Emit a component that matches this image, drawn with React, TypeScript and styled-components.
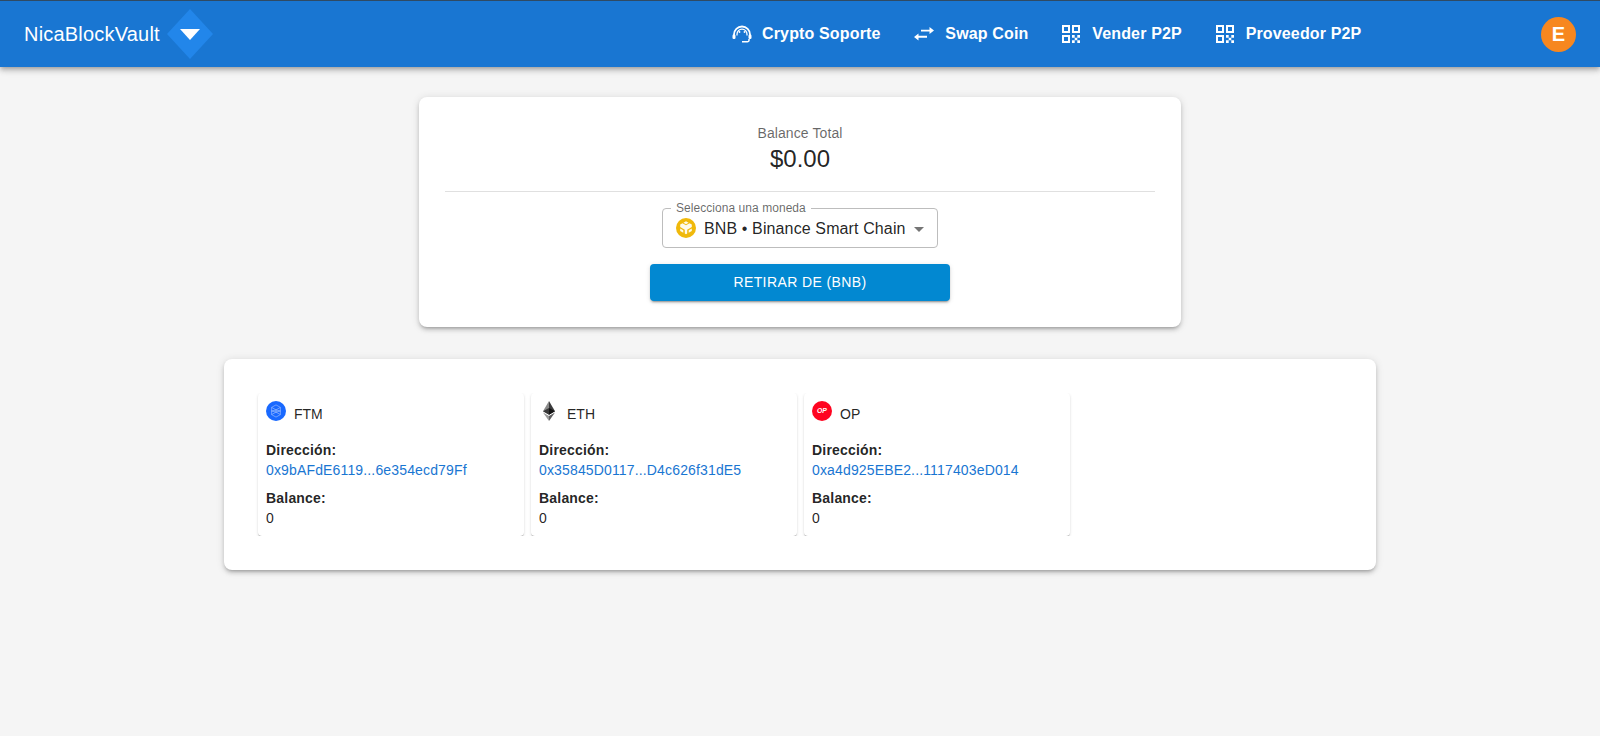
import styled, { createGlobalStyle } from 'styled-components';
import { MdArrowDropDown } from 'react-icons/md';

function FtmIcon() {
  return (
    <svg width="20" height="20" viewBox="0 0 20 20">
      <circle cx="10" cy="10" r="10" fill="#1969ff" />
      <path d="M5.600 6.400L10 3.900l4.400 2.500v7.200L10 16.100l-4.400-2.500zM5.600 6.400L10 8.900l4.400-2.500M5.600 13.600l4.400-2.500 4.400 2.500M10 8.900v2.200M5.600 10L10 8.900l4.400 1.100L10 11.100z" fill="none" stroke="#a9c6ff" strokeWidth="0.600" />
    </svg>
  );
}

function EthIcon() {
  return (
    <svg width="20" height="20" viewBox="0 0 20 20">
      <path d="M10 0L4 10.200l6 3.500z" fill="#8a8a8a" />
      <path d="M10 0l6 10.200-6 3.500z" fill="#3c3c3d" />
      <path d="M10 6.900l-6 3.300 6 3.500z" fill="#393939" />
      <path d="M10 6.900l6 3.300-6 3.500z" fill="#141414" />
      <path d="M4 11.400L10 20v-5z" fill="#9a9a9a" />
      <path d="M16 11.400L10 20v-5z" fill="#5f5f60" />
    </svg>
  );
}

function OpIcon() {
  return (
    <svg width="20" height="20" viewBox="0 0 20 20">
      <circle cx="10" cy="10" r="10" fill="#ff0420" />
      <text x="10" y="12" textAnchor="middle" fontSize="6.800" fontWeight="700" fontStyle="italic" fontFamily="'Liberation Sans', sans-serif" fill="#fff">OP</text>
    </svg>
  );
}

function BnbIcon() {
  return (
    <svg width="20" height="20" viewBox="0 0 20 20">
      <circle cx="10" cy="10" r="10" fill="#f0b90b" />
      <path d="M10 3.200l2.600 1.500L10 6.200 7.400 4.700zM4.200 6.500l2.300-1.300L10 7.200l3.500-2 2.300 1.300v2.600l-4.600 2.700v3.700L10 16.200l-1.200-.7v-3.700L4.200 9.100zM4.200 10.500l3.100 1.800v2.500l-3.100-1.800zM15.800 10.500v2.500l-3.100 1.800v-2.500z" fill="#fff" opacity="0.92" />
    </svg>
  );
}

function HeadsetIcon() {
  return (
    <svg width="20" height="18" viewBox="0 0 20 18" fill="none" stroke="#fff">
      <path d="M2 12V9.500a8 8 0 0 1 16 0V12" strokeWidth="1.800" />
      <path d="M5 10.500V9.200a5 5 0 0 1 10 0v1.300" strokeWidth="1.300" />
      <rect x="0.500" y="9.500" width="3" height="4.500" rx="1.200" fill="#fff" stroke="none" />
      <rect x="16.500" y="9.500" width="3" height="4.500" rx="1.200" fill="#fff" stroke="none" />
      <path d="M17 14v1.200a1.600 1.600 0 0 1-1.600 1.600H10" strokeWidth="1.500" />
      <circle cx="7.500" cy="7" r="0.900" fill="#fff" stroke="none" />
      <circle cx="12.500" cy="7" r="0.900" fill="#fff" stroke="none" />
    </svg>
  );
}

function SwapIcon() {
  return (
    <svg width="21" height="14" viewBox="0 0 21 14" fill="#fff">
      <path d="M7 2.800h8.500V0L20 3.500 15.500 7V4.500H7zM13 8.800H4.500V6.500L0 10l4.500 3.500v-2.800H13z" />
    </svg>
  );
}

function QrIcon() {
  return (
    <svg width="20" height="18" viewBox="0 0 20 18" fill="none">
      <g stroke="#fff" strokeWidth="2">
        <rect x="1" y="1" width="6" height="6" />
        <rect x="11" y="1" width="6" height="6" />
        <rect x="1" y="11" width="6" height="6" />
      </g>
      <path d="M10 10h2.700v2.700H10zM15.300 10H18v2.700h-2.700zM12.700 12.700h2.600v2.600h-2.600zM10 15.300h2.700V18H10zM15.300 15.300H18V18h-2.700z" fill="#fff" />
    </svg>
  );
}

function BrandLogo() {
  return (
    <svg width="46" height="50" viewBox="0 0 46 50">
      <path d="M23 0l23 25-23 25L0 25z" fill="#2286ea" />
      <path d="M13 20h20L23 31z" fill="#fff" />
    </svg>
  );
}

const wallets = [
  { coin: 'FTM', address: '0x9bAFdE6119...6e354ecd79Ff', icon: <FtmIcon /> },
  { coin: 'ETH', address: '0x35845D0117...D4c626f31dE5', icon: <EthIcon /> },
  { coin: 'OP', address: '0xa4d925EBE2...1117403eD014', icon: <OpIcon /> },
];

export default function App() {
  return (
    <>
      <GlobalStyle />
      <AppBar>
        <Brand>
          <BrandName>NicaBlockVault</BrandName>
          <BrandLogo />
        </Brand>
        <Nav>
          <NavItem><HeadsetIcon />Crypto Soporte</NavItem>
          <NavItem><SwapIcon />Swap Coin</NavItem>
          <NavItem><QrIcon />Vender P2P</NavItem>
          <NavItem><QrIcon />Proveedor P2P</NavItem>
        </Nav>
        <Avatar>E</Avatar>
      </AppBar>
      <Main>
        <BalanceCard>
          <BalanceLabel>Balance Total</BalanceLabel>
          <BalanceValue>$0.00</BalanceValue>
          <Divider />
          <SelectBox>
            <SelectLegend>Selecciona una moneda</SelectLegend>
            <BnbIcon />
            <SelectValue>BNB • Binance Smart Chain</SelectValue>
            <SelectArrow size={24} color="#757575" />
          </SelectBox>
          <WithdrawButton>Retirar de (BNB)</WithdrawButton>
        </BalanceCard>
        <WalletsCard>
          {wallets.map((w) => (
            <WalletCard key={w.coin}>
              <CoinRow>
                <CoinIcon>{w.icon}</CoinIcon>
                <span>{w.coin}</span>
              </CoinRow>
              <FieldLabel>Dirección:</FieldLabel>
              <Address>{w.address}</Address>
              <FieldLabel>Balance:</FieldLabel>
              <FieldValue>0</FieldValue>
            </WalletCard>
          ))}
        </WalletsCard>
      </Main>
    </>
  );
}

const GlobalStyle = createGlobalStyle`
  html, body {
    margin: 0;
    height: 100%;
    background: #f5f5f5;
    font-family: "Liberation Sans", Arial, sans-serif;
    color: rgba(0, 0, 0, 0.87);
  }
  * {
    box-sizing: border-box;
  }
`;

const AppBar = styled.header`
  display: flex;
  align-items: center;
  height: 67px;
  padding: 0 24px;
  background: #1976d2;
  border-top: 1px solid #2f4a63;
  color: #fff;
  box-shadow: 0 2px 4px -1px rgba(0, 0, 0, 0.2), 0 4px 5px 0 rgba(0, 0, 0, 0.14), 0 1px 10px 0 rgba(0, 0, 0, 0.12);
`;

const Brand = styled.div`
  display: flex;
  align-items: center;
  gap: 7px;
  width: 708px;
`;

const BrandName = styled.span`
  font-size: 20px;
  letter-spacing: 0.2px;
`;

const Nav = styled.nav`
  display: flex;
  align-items: center;
  flex: 1;
  gap: 33.8px;
  margin-top: -1px;
`;

const NavItem = styled.div`
  display: flex;
  align-items: center;
  gap: 10px;
  font-size: 16px;
  font-weight: 700;
  letter-spacing: 0.15px;
`;

const Avatar = styled.div`
  display: flex;
  align-items: center;
  justify-content: center;
  width: 35px;
  height: 35px;
  border-radius: 50%;
  background: #f7871f;
  font-size: 20px;
  font-weight: 700;
`;

const Main = styled.main`
  display: flex;
  flex-direction: column;
  align-items: center;
  gap: 32px;
  padding-top: 30px;
`;

const Card = styled.section`
  background: #fff;
  border-radius: 8px;
  box-shadow: 0 3px 3px -2px rgba(0, 0, 0, 0.2), 0 3px 4px 0 rgba(0, 0, 0, 0.14), 0 1px 8px 0 rgba(0, 0, 0, 0.12);
`;

const BalanceCard = styled(Card)`
  display: flex;
  flex-direction: column;
  align-items: center;
  width: 762px;
  height: 230px;
  padding: 26px 26px 0;
`;

const BalanceLabel = styled.div`
  font-size: 14px;
  line-height: 20px;
  letter-spacing: 0.1px;
  color: rgba(0, 0, 0, 0.6);
`;

const BalanceValue = styled.div`
  font-size: 24px;
  line-height: 32px;
`;

const Divider = styled.hr`
  align-self: stretch;
  margin: 16px 0 0;
  border: 0;
  border-top: 1px solid #e0e0e0;
`;

const SelectBox = styled.div`
  position: relative;
  display: flex;
  align-items: center;
  width: 276px;
  height: 40px;
  margin-top: 16px;
  padding: 0 6px 0 13px;
  border: 1px solid #bdbdbd;
  border-radius: 4px;
`;

const SelectLegend = styled.span`
  position: absolute;
  top: -8px;
  left: 8px;
  padding: 0 5px;
  background: #fff;
  font-size: 12px;
  line-height: 14px;
  letter-spacing: 0.05px;
  color: rgba(0, 0, 0, 0.6);
`;

const SelectValue = styled.span`
  flex: 1;
  margin: 2px 0 0 8px;
  font-size: 16px;
  letter-spacing: 0.12px;
  white-space: nowrap;
`;

const SelectArrow = styled(MdArrowDropDown)`
  margin-top: 2px;
`;

const WithdrawButton = styled.button`
  width: 300px;
  height: 37px;
  margin-top: 16px;
  padding: 0 0 2px;
  border: 0;
  border-radius: 4px;
  background: #0288d1;
  color: #fff;
  font-family: inherit;
  font-size: 14px;
  letter-spacing: 0.4px;
  text-transform: uppercase;
  box-shadow: 0 3px 1px -2px rgba(0, 0, 0, 0.2), 0 2px 2px 0 rgba(0, 0, 0, 0.14), 0 1px 5px 0 rgba(0, 0, 0, 0.12);
`;

const WalletsCard = styled(Card)`
  display: grid;
  grid-template-columns: repeat(4, 265.5px);
  column-gap: 7.5px;
  width: 1152px;
  height: 211px;
  padding: 34px 34px 0;
`;

const WalletCard = styled.article`
  height: 143px;
  padding: 0 8px;
  border-radius: 4px;
  box-shadow: 0 2px 1px -1px rgba(0, 0, 0, 0.2), 0 1px 1px 0 rgba(0, 0, 0, 0.14), 0 1px 3px 0 rgba(0, 0, 0, 0.12);
  clip-path: inset(0 -4px 0 -4px);
`;

const CoinRow = styled.div`
  display: flex;
  align-items: center;
  gap: 8px;
  height: 42px;
  margin-bottom: 5px;
  font-size: 14px;
`;

const CoinIcon = styled.span`
  display: flex;
  margin-top: -6px;
`;

const FieldLabel = styled.div`
  font-size: 14px;
  font-weight: 700;
  line-height: 20px;
  letter-spacing: 0.2px;
`;

const Address = styled.div`
  margin-bottom: 8px;
  font-size: 14px;
  line-height: 20px;
  letter-spacing: 0.15px;
  color: #1976d2;
`;

const FieldValue = styled.div`
  font-size: 14px;
  line-height: 20px;
`;
